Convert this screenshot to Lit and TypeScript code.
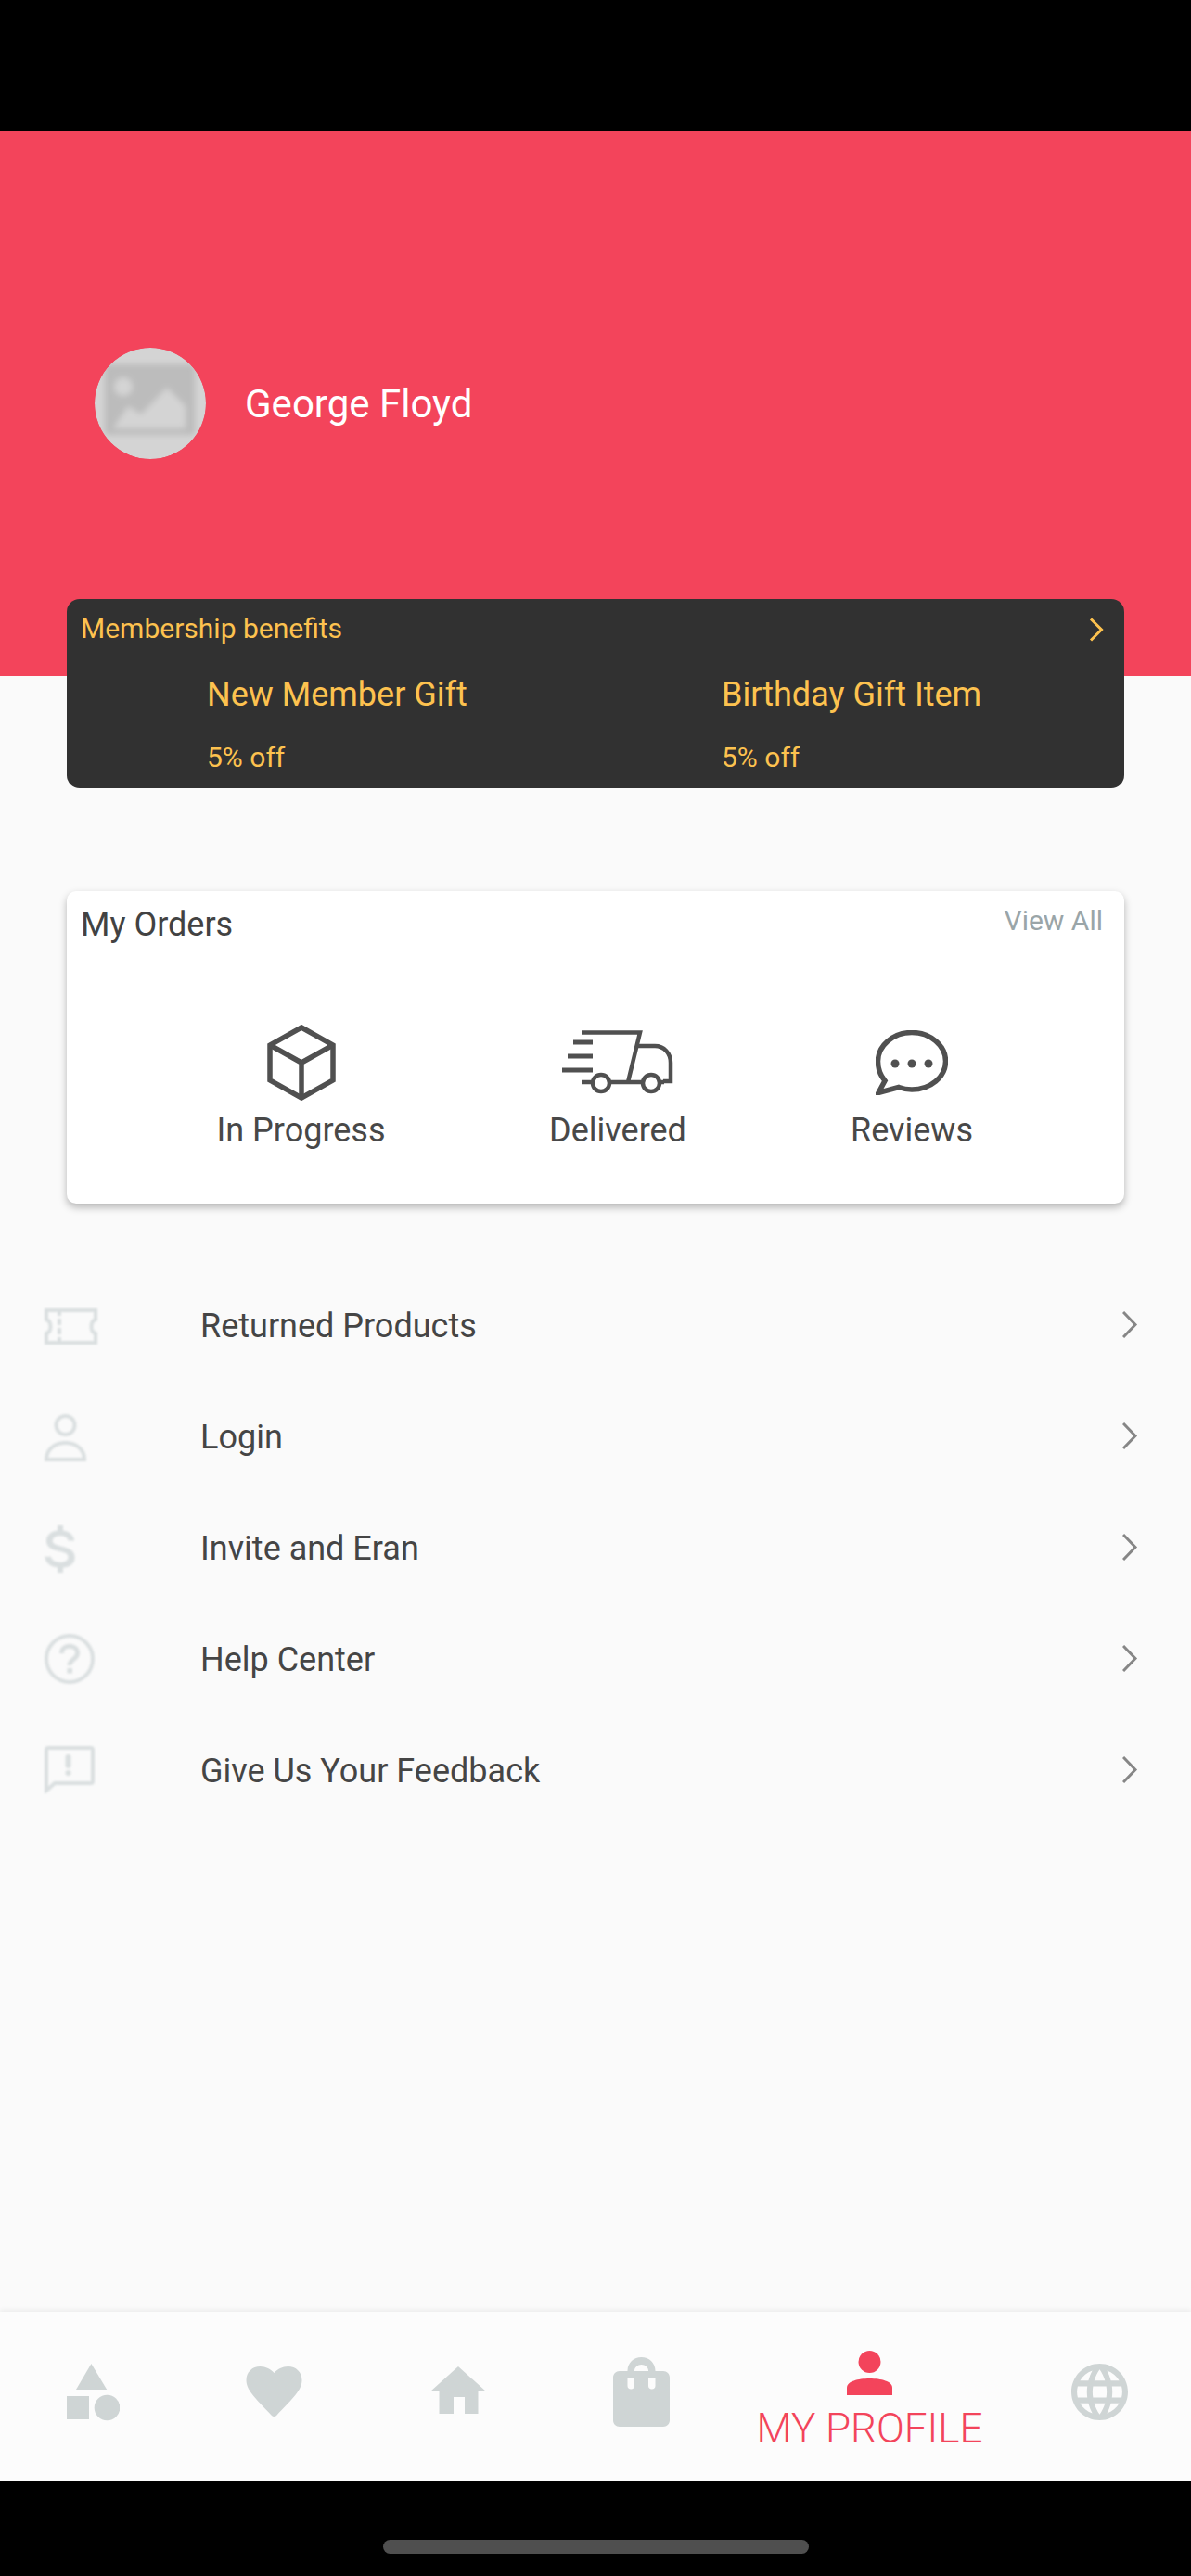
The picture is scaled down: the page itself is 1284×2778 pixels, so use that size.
import { LitElement, css, html, svg } from "lit";
import { customElement } from "lit/decorators.js";

const chevron = svg`<path d="M1 1l13 13.500L1 28" fill="none" stroke="currentColor" stroke-width="3"/>`;

const menuIcons = {
    ticket: svg`<g fill="none" stroke="currentColor" stroke-width="4"><path d="M2 2h53v10c-6 2-6 13 0 15v10H2V27c6-2 6-13 0-15z"/><path d="M16 1v37" stroke-dasharray="7 3"/></g>`,
    person: svg`<g fill="none" stroke="currentColor" stroke-width="4"><circle cx="22.500" cy="12" r="10"/><path d="M2 49c0-24 41-24 41 0z"/></g>`,
    dollar: svg`<path fill="currentColor" d="M14 0h6v5.400c6.600.9 11.400 4.800 12.300 11.100h-6.700c-.8-3.500-3.900-5.300-8.500-5.300-5 0-8.300 2-8.300 5.300 0 3 2.300 4.400 8.900 5.900 8.700 2 15 4.500 15 12 0 6.600-5.100 10.500-12.700 11.300V51h-6v-5.400C6.400 44.700 1 40.600.2 33.800h6.800c.7 3.900 4.400 6 10 6 5.400 0 8.500-2.100 8.500-5.500 0-3.200-2.500-4.700-9.400-6.300C7.700 26 1.900 23.500 1.900 16.700 1.900 10.600 6.900 6.300 14 5.400z"/>`,
    help: svg`<circle cx="27" cy="27" r="25" fill="none" stroke="currentColor" stroke-width="4"/><path d="M18.500 21c0-10.500 17-10.500 17 0 0 6.500-8.500 6-8.500 13" fill="none" stroke="currentColor" stroke-width="5"/><rect x="24.500" y="37" width="5.500" height="5.500" fill="currentColor"/>`,
    feedback: svg`<path d="M4 2h46a2 2 0 0 1 2 2v34a2 2 0 0 1-2 2H11L2 48V4a2 2 0 0 1 2-2z" fill="none" stroke="currentColor" stroke-width="4"/><rect x="22.500" y="9" width="6" height="15" rx="3" fill="currentColor"/><rect x="22.500" y="26" width="6" height="6" rx="3" fill="currentColor"/>`,
};

const menu = [
    { icon: menuIcons.ticket, w: 57, h: 39, dy: 5, label: "Returned Products" },
    { icon: menuIcons.person, w: 45, h: 51, dy: 5, label: "Login" },
    { icon: menuIcons.dollar, w: 34, h: 51, dy: 5, label: "Invite and Eran" },
    { icon: menuIcons.help, w: 54, h: 54, dy: 2, label: "Help Center" },
    { icon: menuIcons.feedback, w: 54, h: 51, dy: 0, label: "Give Us Your Feedback" },
];

@customElement("app-root")
export class AppRoot extends LitElement {
    static styles = css`
        :host {
            display: block;
            width: 1284px;
            height: 2778px;
            background: #000;
            font-family: Roboto, sans-serif;
            color: #424242;
        }

        .screen {
            display: flex;
            flex-direction: column;
            height: 2778px;
            padding-top: 141px;
            box-sizing: border-box;
        }

        .content {
            flex: 1;
            background: #fafafa;
            min-height: 0;
        }

        .hero {
            height: 588px;
            box-sizing: border-box;
            padding: 234px 0 0 102px;
            background: #f3445b;
        }

        .user {
            display: flex;
            align-items: center;
            gap: 42px;
            color: #fff;
            font-size: 42px;
        }

        .avatar {
            display: block;
            width: 120px;
            height: 120px;
            border-radius: 50%;
        }

        .benefits {
            position: relative;
            height: 204px;
            margin: -83px 72px 0;
            box-sizing: border-box;
            padding: 13px 15px 0;
            border-radius: 14px;
            background: #313131;
            color: #fdc24f;
        }

        .benefits-head {
            display: flex;
            justify-content: space-between;
            align-items: center;
            height: 36px;
            font-size: 30px;
        }

        .benefits-head svg {
            margin: 3px 7px 0 0;
        }

        .gifts {
            display: grid;
            grid-template-columns: 555px 1fr;
            padding: 33px 0 0 136px;
        }

        .gift-name {
            font-size: 36px;
            line-height: 42px;
        }

        .gift-off {
            margin-top: 31px;
            font-size: 30px;
            line-height: 32px;
        }

        .orders {
            height: 337px;
            margin: 111px 72px 0;
            box-sizing: border-box;
            padding: 16px 16px 0 15px;
            border-radius: 10px;
            background: #fff;
            box-shadow: 0 4px 8px rgba(0, 0, 0, 0.28);
        }

        .orders-head {
            display: flex;
            justify-content: space-between;
            font-size: 36px;
            line-height: 40px;
        }

        .view-all {
            margin: -4px 7px 0 0;
            color: #9aa5a8;
            font-size: 30px;
        }

        .order-types {
            display: grid;
            grid-template-columns: 475px 208px 1fr;
            margin-top: 88px;
        }

        .order-type {
            display: flex;
            flex-direction: column;
            align-items: center;
            font-size: 36px;
            line-height: 40px;
            color: #484848;
            gap: 12px;
        }

        .order-icon {
            display: flex;
            align-items: center;
            height: 82px;
        }

        .order-icon svg {
            filter: blur(0.5px);
        }

        .menu {
            margin-top: 70px;
        }

        .row {
            display: flex;
            align-items: center;
            height: 120px;
            padding: 0 57px 0 48px;
            font-size: 36px;
            color: #454545;
        }

        .row-icon {
            flex: 0 0 168px;
            display: flex;
            color: #dadfe0;
        }

        .row-icon svg {
            filter: blur(0.8px);
        }

        .row-label {
            flex: 1;
            padding-top: 4px;
        }

        .row-chevron {
            color: #868686;
        }

        .tabs {
            display: flex;
            height: 183px;
            background: #fcfcfc;
            box-shadow: 0 -2px 5px rgba(0, 0, 0, 0.06);
            color: #cfd5d5;
        }

        .tab {
            display: flex;
            justify-content: center;
            align-items: flex-start;
            box-sizing: border-box;
        }

        .tab svg {
            display: block;
        }

        .tab.active {
            flex-direction: column;
            align-items: center;
            justify-content: flex-start;
            color: #f3445b;
            font-size: 44px;
            font-weight: 300;
        }

        .tab-label {
            margin-top: 13px;
            line-height: 46px;
        }

        .home-bar {
            flex: 0 0 102px;
            display: flex;
            justify-content: center;
            padding-top: 63px;
            box-sizing: border-box;
        }

        .home-bar div {
            width: 459px;
            height: 15px;
            border-radius: 8px;
            background: #4f4f4f;
        }
    `;

    render() {
        return html`
            <div class="screen">
                <div class="content">
                    <div class="hero">
                        <div class="user">
                            <svg class="avatar" viewBox="0 0 120 120">
                                <defs>
                                    <filter id="soft"><feGaussianBlur stdDeviation="3"/></filter>
                                    <clipPath id="round"><circle cx="60" cy="60" r="60"/></clipPath>
                                </defs>
                                <g clip-path="url(#round)">
                                    <rect width="120" height="120" fill="#d4d4d4"/>
                                    <g filter="url(#soft)">
                                        <rect x="11" y="18" width="97" height="76" fill="#bcbcbc"/>
                                        <circle cx="31" cy="42" r="10" fill="#d4d4d4"/>
                                        <path d="M20 87l16-24 14 9 28-29 20 20v24z" fill="#d4d4d4"/>
                                    </g>
                                </g>
                            </svg>
                            <span>George Floyd</span>
                        </div>
                    </div>

                    <div class="benefits">
                        <div class="benefits-head">
                            <span>Membership benefits</span>
                            <svg width="16" height="26" viewBox="0 0 16 26"><path d="M2 1.500l11.500 11.500L2 24.500" fill="none" stroke="currentColor" stroke-width="3"/></svg>
                        </div>
                        <div class="gifts">
                            <div>
                                <div class="gift-name">New Member Gift</div>
                                <div class="gift-off">5% off</div>
                            </div>
                            <div>
                                <div class="gift-name">Birthday Gift Item</div>
                                <div class="gift-off">5% off</div>
                            </div>
                        </div>
                    </div>

                    <div class="orders">
                        <div class="orders-head">
                            <span>My Orders</span>
                            <span class="view-all">View All</span>
                        </div>
                        <div class="order-types">
                            <div class="order-type">
                                <div class="order-icon">
                                    <svg width="74" height="82" viewBox="0 0 74 82" fill="none" stroke="#505050" stroke-width="5.500">
                                        <path d="M37 3l34 19v38L37 79 3 60V22z"/>
                                        <path d="M3 22l34 19 34-19M37 41v38"/>
                                    </svg>
                                </div>
                                <span>In Progress</span>
                            </div>
                            <div class="order-type">
                                <div class="order-icon">
                                    <svg width="120" height="70" viewBox="0 0 120 70" fill="none" stroke="#505050" stroke-width="4.500">
                                        <path d="M21 2.500h63L71 56M21 56h12M51 56h36M105 56h5"/>
                                        <path d="M12 13h21M6 28h27M0 43h33" stroke-width="5"/>
                                        <circle cx="42" cy="57" r="9"/>
                                        <circle cx="96" cy="57" r="9"/>
                                        <path d="M80 17h20c10 0 17 8 17 18v20h-8"/>
                                    </svg>
                                </div>
                                <span>Delivered</span>
                            </div>
                            <div class="order-type">
                                <div class="order-icon">
                                    <svg width="78" height="70" viewBox="0 0 78 70" fill="none" stroke="#505050" stroke-width="5.500">
                                        <path d="M39 2.500c20 0 36.500 14 36.500 31S59 64 39 64c-5 0-10-1-14-2.500L3 67.500l7-13C5.500 49 2.500 42 2.500 33.500c0-17 16.500-31 36.500-31z"/>
                                        <g fill="#505050" stroke="none">
                                            <circle cx="21" cy="36" r="4.500"/>
                                            <circle cx="39" cy="36" r="4.500"/>
                                            <circle cx="57" cy="36" r="4.500"/>
                                        </g>
                                    </svg>
                                </div>
                                <span>Reviews</span>
                            </div>
                        </div>
                    </div>

                    <div class="menu">
                        ${menu.map(item => html`
                            <div class="row">
                                <div class="row-icon">
                                    <svg style="margin-top: ${item.dy}px" width=${item.w} height=${item.h} viewBox="0 0 ${item.w} ${item.h}">${item.icon}</svg>
                                </div>
                                <div class="row-label">${item.label}</div>
                                <svg class="row-chevron" width="17" height="29" viewBox="0 0 17 29">${chevron}</svg>
                            </div>
                        `)}
                    </div>
                </div>

                <div class="tabs">
                    <div class="tab" style="width: 200px; padding-top: 56px">
                        <svg width="57" height="62" viewBox="0 0 57 62" fill="currentColor">
                            <path d="M26.400 0l16.800 28H10z"/>
                            <rect x="0" y="35" width="24" height="25"/>
                            <circle cx="43.500" cy="47.500" r="13.800"/>
                        </svg>
                    </div>
                    <div class="tab" style="width: 191px; padding-top: 59px">
                        <svg width="61" height="54" viewBox="0 0 60 54" fill="currentColor">
                            <path d="M30 54c-1 0-2-.5-3-1.500C14 38 0 27 0 15 0 6 6.500 0 15 0c6 0 11.500 3 15 7 3.500-4 9-7 15-7 8.500 0 15 6 15 15 0 12-14 23-27 37.500-1 1-2 1.500-3 1.500z"/>
                        </svg>
                    </div>
                    <div class="tab" style="width: 206px; padding-top: 59px">
                        <svg width="60" height="52" viewBox="0 0 60 52" fill="currentColor">
                            <path d="M30 0l30 27h-8.500v24H37V33H25v18H9.500V27H0z"/>
                        </svg>
                    </div>
                    <div class="tab" style="width: 189px; padding-top: 49px">
                        <svg width="61" height="75" viewBox="0 0 61 75" fill="currentColor">
                            <path fill-rule="evenodd" d="M15.500 15v-.500C15.500 6 22.500 0 30.500 0s15 6 15 14.500v.500H54c4 0 7 3 7 7v46c0 4-3 7-7 7H7c-4 0-7-3-7-7V22c0-4 3-7 7-7zm7.500 0h15v-.500c0-3.500-3.500-6.500-7.500-6.500s-7.500 3-7.500 6.500zM15.500 23v8c0 2 1.500 3.500 3.750 3.500S23 33 23 31v-8zm22.500 0v8c0 2 1.500 3.500 3.750 3.500S45.500 33 45.500 31v-8z"/>
                        </svg>
                    </div>
                    <div class="tab active" style="width: 303px; padding-top: 42px">
                        <svg width="49" height="48" viewBox="0 0 49 48" fill="currentColor">
                            <ellipse cx="24.500" cy="12" rx="12" ry="12"/>
                            <path d="M0 48V40c0-7 12-10 24.500-10S49 33 49 40v8z"/>
                        </svg>
                        <span class="tab-label">MY PROFILE</span>
                    </div>
                    <div class="tab" style="flex: 1; padding: 56px 3px 0 0">
                        <svg width="61" height="61" viewBox="2 2 20 20" fill="currentColor">
                            <path d="M11.990 2C6.470 2 2 6.480 2 12s4.470 10 9.990 10C17.520 22 22 17.520 22 12S17.520 2 11.990 2zm6.930 6h-2.950c-.32-1.250-.78-2.450-1.380-3.560 1.840.63 3.370 1.910 4.330 3.560zM12 4.040c.83 1.200 1.480 2.530 1.910 3.960h-3.820c.43-1.430 1.080-2.760 1.910-3.960zM4.260 14C4.100 13.360 4 12.690 4 12s.1-1.360.26-2h3.380c-.08.66-.14 1.320-.14 2 0 .68.06 1.340.14 2H4.260zm.82 2h2.950c.32 1.250.78 2.450 1.380 3.560-1.840-.63-3.370-1.900-4.330-3.560zm2.950-8H5.080c.96-1.660 2.490-2.930 4.330-3.560C8.810 5.550 8.350 6.750 8.030 8zM12 19.960c-.83-1.200-1.480-2.530-1.910-3.960h3.820c-.43 1.430-1.080 2.760-1.910 3.960zM14.340 14H9.660c-.09-.66-.16-1.320-.16-2 0-.68.07-1.350.16-2h4.680c.09.65.16 1.320.16 2 0 .68-.07 1.340-.16 2zm.25 5.560c.6-1.110 1.060-2.310 1.380-3.560h2.950c-.96 1.650-2.490 2.930-4.330 3.560zM16.360 14c.08-.66.14-1.320.14-2 0-.68-.06-1.340-.14-2h3.380c.16.64.26 1.310.26 2s-.1 1.360-.26 2h-3.380z"/>
                        </svg>
                    </div>
                </div>
                <div class="home-bar"><div></div></div>
            </div>
        `;
    }
}
